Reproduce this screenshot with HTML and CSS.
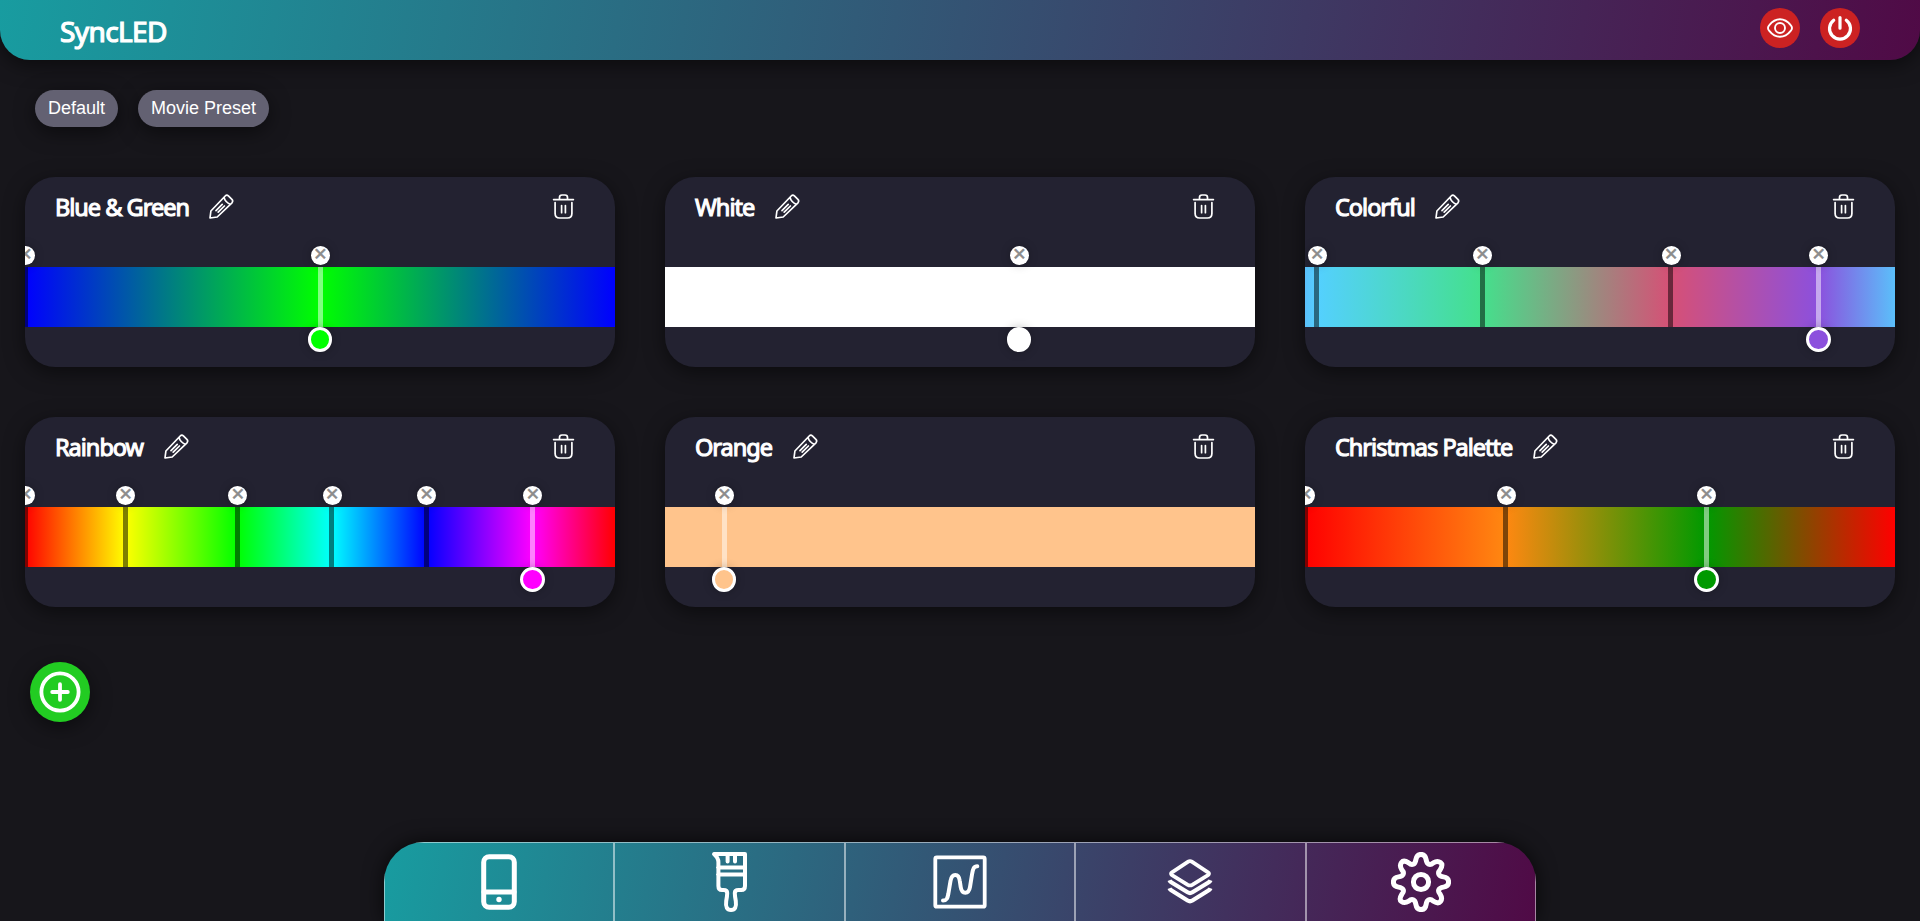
FILE: index.html
```
<!DOCTYPE html>
<html lang="en">
<head>
<meta charset="utf-8">
<title>SyncLED</title>
<link rel="stylesheet" href="styles.css">
</head>
<body>
<svg class="sprite" aria-hidden="true">
  <symbol id="pencil" viewBox="0 0 25 25">
    <path d="M1 24 L1.9 17 L16.2 2 Q17.8 .4 19.4 1.9 L22.9 5.4 Q24.4 7 23 8.8 L8.2 23 Z M15.2 3.6 Q15.4 5.6 17.2 7.5 Q19 9.4 21.2 10.2 M7 16.6 L13.2 10.4 M9.2 18.2 L15.4 12"/>
  </symbol>
  <symbol id="trash" viewBox="0 0 25 25">
    <path d="M2.6 5.6 H22.4 M8.5 5.2 V3.4 Q8.5 1 11 1 H14 Q16.5 1 16.5 3.4 V5.2 M4.1 8.6 V19.5 Q4.1 24 8.6 24 H16.4 Q20.9 24 20.9 19.5 V8.6 M10.6 11.5 V18.7 M14.4 11.5 V18.7"/>
  </symbol>
</svg>

<header class="topbar">
  <h1 class="brand">SyncLED</h1>
  <div class="actions">
    <button class="round" aria-label="Preview"><svg viewBox="0 0 26 26"><path class="thin" d="M1 13 Q1 11.5 2.3 10.1 Q7 4.2 13 4.2 T23.7 10.1 Q25 11.5 25 13 T23.7 15.9 Q19 21.8 13 21.8 T2.3 15.9 Q1 14.5 1 13 Z"/><circle class="thin" cx="13" cy="13" r="5"/></svg></button>
    <button class="round" aria-label="Power"><svg viewBox="0 0 26 26"><path class="thick" d="M6.7 5.2 A10.5 10.5 0 1 0 19.3 5.2 M13 2.6 V13.2"/></svg></button>
  </div>
</header>

<nav class="presets">
  <button class="preset">Default</button>
  <button class="preset">Movie Preset</button>
</nav>

<main class="palettes">
  <section class="card">
    <div class="head"><h2>Blue &amp; Green</h2><svg class="icon"><use href="#pencil"/></svg><svg class="icon trash"><use href="#trash"/></svg></div>
    <div class="bar blue-green">
      <div class="stop" style="left:0%"><b>✕</b></div>
      <div class="stop active" style="left:50%"><b>✕</b><i style="background:#00ff00"></i></div>
    </div>
  </section>
  <section class="card">
    <div class="head"><h2>White</h2><svg class="icon"><use href="#pencil"/></svg><svg class="icon trash"><use href="#trash"/></svg></div>
    <div class="bar white">
      <div class="stop active" style="left:60%"><b>✕</b><i style="background:#ffffff"></i></div>
    </div>
  </section>
  <section class="card">
    <div class="head"><h2>Colorful</h2><svg class="icon"><use href="#pencil"/></svg><svg class="icon trash"><use href="#trash"/></svg></div>
    <div class="bar colorful">
      <div class="stop" style="left:2%"><b>✕</b></div>
      <div class="stop" style="left:30%"><b>✕</b></div>
      <div class="stop" style="left:62%"><b>✕</b></div>
      <div class="stop active" style="left:87%"><b>✕</b><i style="background:#8c50dd"></i></div>
    </div>
  </section>
  <section class="card">
    <div class="head"><h2>Rainbow</h2><svg class="icon"><use href="#pencil"/></svg><svg class="icon trash"><use href="#trash"/></svg></div>
    <div class="bar rainbow">
      <div class="stop" style="left:0%"><b>✕</b></div>
      <div class="stop" style="left:17%"><b>✕</b></div>
      <div class="stop" style="left:36%"><b>✕</b></div>
      <div class="stop" style="left:52%"><b>✕</b></div>
      <div class="stop" style="left:68%"><b>✕</b></div>
      <div class="stop active" style="left:86%"><b>✕</b><i style="background:#ff00ff"></i></div>
    </div>
  </section>
  <section class="card">
    <div class="head"><h2>Orange</h2><svg class="icon"><use href="#pencil"/></svg><svg class="icon trash"><use href="#trash"/></svg></div>
    <div class="bar orange">
      <div class="stop active" style="left:10%"><b>✕</b><i style="background:#ffc48c"></i></div>
    </div>
  </section>
  <section class="card">
    <div class="head"><h2>Christmas Palette</h2><svg class="icon"><use href="#pencil"/></svg><svg class="icon trash"><use href="#trash"/></svg></div>
    <div class="bar christmas">
      <div class="stop" style="left:0%"><b>✕</b></div>
      <div class="stop" style="left:34%"><b>✕</b></div>
      <div class="stop active" style="left:68%"><b>✕</b><i style="background:#009900"></i></div>
    </div>
  </section>
</main>

<button class="add" aria-label="Add palette"><svg viewBox="0 0 42 42"><circle cx="21" cy="21" r="18.6"/><path d="M21 13.2 V28.8 M13.2 21 H28.8"/></svg></button>

<nav class="tabs">
  <a class="tab"><svg viewBox="0 0 60 60"><rect x="14.7" y="4.7" width="30.6" height="50.6" rx="5.5" stroke-width="5"/><path d="M15 40 H45" stroke-width="5"/><circle class="dot" cx="30" cy="47.5" r="2.7"/></svg></a>
  <a class="tab"><svg viewBox="0 0 60 60"><path stroke-width="4" d="M14 2 H45 V34 Q45 38 41.2 38 H38.5 Q34.8 38 34.8 41 Q34.8 44 35.8 49 Q37 58 31 58 T26.2 49 Q27.2 44 27.2 41 Q27.2 38 23.5 38 H22 Q18.4 38 18.4 34 V10 Q18.4 6 14 2 Z M18 15.5 H45 M18 22.5 H45 M27.6 3 V9.5 M35 3 V9.5"/></svg></a>
  <a class="tab"><svg viewBox="0 0 60 60"><rect x="5.3" y="5.3" width="49.4" height="49.4" rx="1.5" stroke-width="3.8"/><path stroke-width="4" d="M13 48.5 C17 48.5 17.5 46 18.3 42 L20.5 29 Q21.5 23 25.3 23 T29.8 29 L30.7 35 Q31.5 40.7 35.3 40.7 T40 35 L42 22.5 C43 16.5 44 14.2 47.3 14.2"/></svg></a>
  <a class="tab"><svg viewBox="0 0 60 60"><path stroke-width="3.8" d="M28.2 9.7 Q30 8.5 31.8 9.7 L48 20.3 Q50 21.7 48 23.1 L32.2 32.8 Q30 34 27.8 32.8 L12 23.1 Q10 21.7 12 20.3 Z"/><path class="flat" stroke-width="4.2" d="M9.5 28.2 Q10 29.6 12 30.8 L27.6 40.3 Q30 41.8 32.4 40.3 L48 30.8 Q50 29.6 50.5 28.2 M9.5 36.2 Q10 37.6 12 38.8 L27.6 48.5 Q30 50 32.4 48.5 L48 38.8 Q50 37.6 50.5 36.2"/></svg></a>
  <a class="tab"><svg viewBox="0 0 60 60"><circle cx="30" cy="30" r="7.6" stroke-width="5"/><path stroke-width="5" d="M24.9 7.5 C25.5 4 27 2.4 30 2.4 S34.5 4 35.1 7.5 C35.9 12.6 39 13.8 42.3 10.8 C45.5 8.8 47.5 9 49.5 10.5 S51.2 14.5 49.2 17.7 C46.2 21 47.4 24.1 52.5 24.9 C56 25.5 57.6 27 57.6 30 S56 34.5 52.5 35.1 C47.4 35.9 46.2 39 49.2 42.3 C51.2 45.5 51 47.5 49.5 49.5 S45.5 51.2 42.3 49.2 C39 46.2 35.9 47.4 35.1 52.5 C34.5 56 33 57.6 30 57.6 S25.5 56 24.9 52.5 C24.1 47.4 21 46.2 17.7 49.2 C14.5 51.2 12.5 51 10.5 49.5 S8.8 45.5 10.8 42.3 C13.8 39 12.6 35.9 7.5 35.1 C4 34.5 2.4 33 2.4 30 S4 25.5 7.5 24.9 C12.6 24.1 13.8 21 10.8 17.7 C8.8 14.5 9 12.5 10.5 10.5 S14.5 8.8 17.7 10.8 C21 13.8 24.1 12.6 24.9 7.5 Z"/></svg></a>
</nav>
</body>
</html>
```
FILE: styles.css
```
* { box-sizing: border-box; }

html, body { height: 100%; }

body {
  margin: 0;
  display: flex;
  flex-direction: column;
  overflow: hidden;
  background: #17161b;
  color: #fff;
  font-family: "Noto Sans", "Open Sans", sans-serif;
}

button { border: 0; padding: 0; color: #fff; }

svg {
  fill: none;
  stroke: #fff;
  stroke-linecap: round;
  stroke-linejoin: round;
}

.sprite { display: none; }

.topbar {
  flex: none;
  height: 60px;
  padding: 0 60px;
  display: flex;
  justify-content: space-between;
  border-radius: 0 0 30px 30px;
  background: linear-gradient(100deg, #189ca0, #500a46);
  box-shadow: 0 5px 20px rgba(0, 0, 0, .5);
}

.brand {
  margin: 0;
  font-size: 28px;
  font-weight: 400;
  line-height: 62px;
  letter-spacing: -.6px;
  -webkit-text-stroke: 1.2px #fff;
}

.actions { display: flex; gap: 20px; padding-top: 8px; }

.round {
  width: 40px;
  height: 40px;
  display: grid;
  place-items: center;
  border-radius: 50%;
  background: #cc2222;
}

.round svg { width: 26px; height: 26px; }
.thin { stroke-width: 1.9; }
.thick { stroke-width: 3.2; }

.presets { flex: none; display: flex; gap: 20px; padding: 30px 35px 0; }

.preset {
  height: 37px;
  padding: 0 13px;
  border-radius: 20px;
  background: #636172;
  font: 18px "Liberation Sans", Arial, sans-serif;
  box-shadow: 0 5px 20px rgba(0, 0, 0, .5);
}

.palettes {
  flex: none;
  display: grid;
  grid-template-columns: repeat(3, 1fr);
  gap: 50px;
  padding: 50px 25px 0;
}

.card {
  height: 190px;
  overflow: hidden;
  border-radius: 30px;
  background: #232231;
  box-shadow: 0 5px 20px rgba(0, 0, 0, .5);
}

.head {
  height: 90px;
  padding: 17px 39.5px 0 30px;
  display: flex;
  align-items: flex-start;
}

.head h2 {
  margin: -3px 20.5px 0 0;
  font-size: 23.5px;
  font-weight: 400;
  line-height: 33px;
  letter-spacing: -1px;
  white-space: nowrap;
  -webkit-text-stroke: 1.1px #fff;
}

.icon { width: 25px; height: 25px; stroke-width: 1.7; }
.trash { margin-left: auto; }

.bar { position: relative; height: 60px; }
.blue-green { background: linear-gradient(90deg, #00f, #0f0 50%, #00f); }
.white { background: #fff; }
.colorful { background: linear-gradient(90deg, #5bbffa, #54d0ff 2%, #44e08c 30%, #d65076 62%, #8c50dd 87%, #5bbffa); }
.rainbow { background: linear-gradient(90deg, #f00, #ff0 17%, #0f0 36%, #0ff 52%, #00f 68%, #f0f 86%, #f00); }
.orange { background: #ffc48c; }
.christmas { background: linear-gradient(90deg, #f00, #ff8811 34%, #009900 68%, #f00); }

.stop {
  position: absolute;
  top: 0;
  width: 5px;
  height: 60px;
  margin-left: -2.5px;
  background: rgba(0, 0, 0, .5);
}

.stop.active { background: rgba(255, 255, 255, .5); }

.stop b {
  position: absolute;
  left: -6.6px;
  top: -21px;
  width: 19px;
  height: 19px;
  border-radius: 50%;
  background: #fff;
  color: #8c8c8c;
  font: 17px/16px "DejaVu Sans", sans-serif;
  -webkit-text-stroke: .5px #8c8c8c;
  display: flex;
  justify-content: center;
  box-shadow: 0 0 10px rgba(0, 0, 0, .25);
}

.stop i {
  position: absolute;
  left: -9.7px;
  top: 60px;
  width: 24.5px;
  height: 25px;
  border: 3px solid #fff;
  border-radius: 50%;
  box-shadow: 0 0 10px rgba(0, 0, 0, .25);
}

.add {
  flex: none;
  width: 60px;
  height: 60px;
  margin: 55px 0 0 30px;
  display: grid;
  place-items: center;
  border-radius: 50%;
  background: #22cc22;
  box-shadow: 0 5px 20px rgba(0, 0, 0, .5);
}

.add svg { width: 42px; height: 42px; stroke-width: 3.8; }

.tabs {
  flex: none;
  width: 60%;
  height: 79px;
  margin: auto auto 0;
  display: grid;
  grid-template-columns: repeat(5, 1fr);
  overflow: hidden;
  border-radius: 40px 40px 0 0;
  background: linear-gradient(100deg, #189ca0, #500a46);
  box-shadow: 0 0 20px rgba(0, 0, 0, .7);
}

.tab {
  display: flex;
  justify-content: center;
  padding-top: 9px;
  border: 1px solid rgba(255, 255, 255, .5);
  border-bottom: 0;
}

.tab svg { width: 60px; height: 60px; }
.dot { fill: #fff; stroke: none; }
.flat { stroke-linecap: butt; }
```
